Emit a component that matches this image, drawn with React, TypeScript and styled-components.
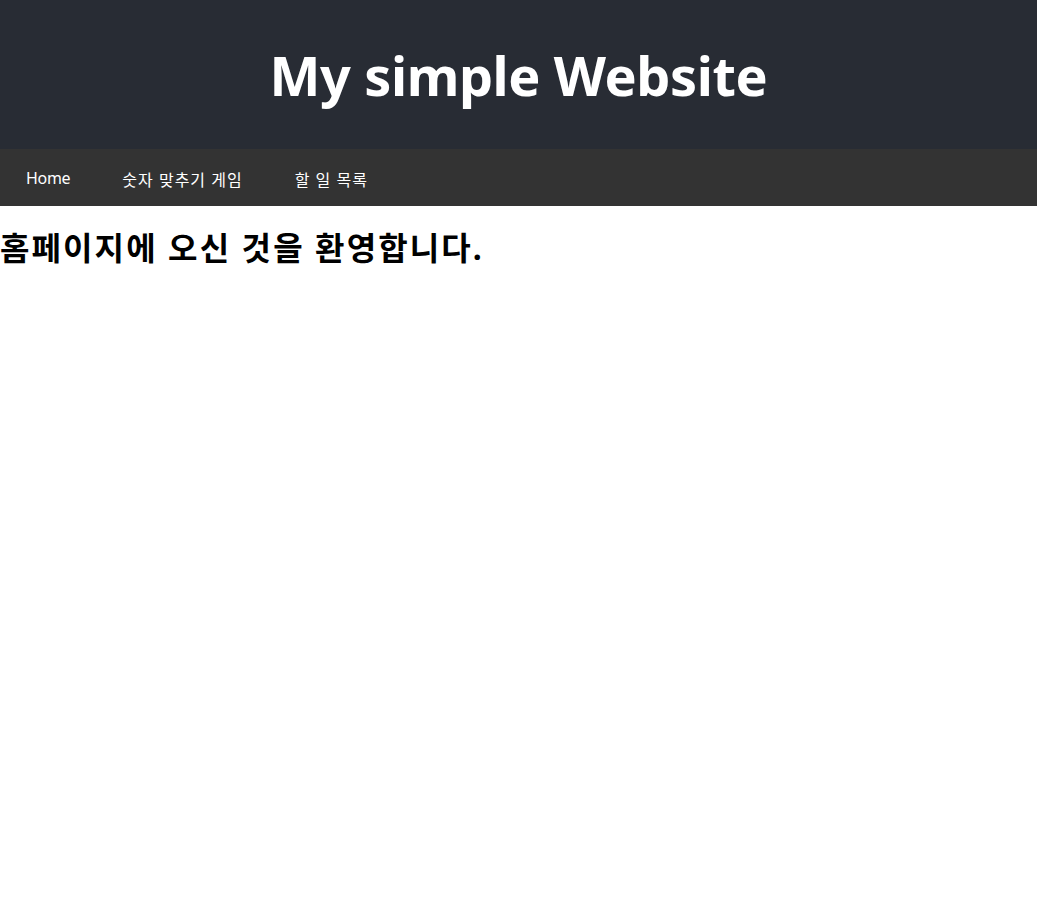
import styled, { createGlobalStyle } from "styled-components";

const GlobalStyle = createGlobalStyle`
  body {
    margin: 0;
    font-family: "Noto Sans", "Noto Sans CJK KR", sans-serif;
    background: #ffffff;
  }
`;

const Header = styled.header`
  background-color: #282c34;
  height: 149px;
  display: flex;
  align-items: center;
  justify-content: center;
`;

const SiteTitle = styled.h1`
  margin: 0;
  color: #ffffff;
  font-size: 54px;
  font-weight: bold;
  letter-spacing: -0.4px;
`;

const NavBar = styled.nav`
  background-color: #333333;
  height: 57px;
  display: flex;
  align-items: center;
`;

const NavList = styled.ul`
  list-style: none;
  margin: 2px 0 0;
  padding: 0;
  display: flex;
`;

const NavItem = styled.li<{ $wide?: boolean }>`
  padding: 0 26px;
  & a {
    color: #ffffff;
    text-decoration: none;
    font-size: 16px;
    letter-spacing: ${({ $wide }) => ($wide ? "1px" : "-0.3px")};
  }
`;

const Welcome = styled.h1`
  margin: 17px 0;
  font-size: 32px;
  font-weight: bold;
  color: #000000;
  letter-spacing: 2.1px;
`;

export default function App() {
  return (
    <>
      <GlobalStyle />
      <Header>
        <SiteTitle>My simple Website</SiteTitle>
      </Header>
      <NavBar>
        <NavList>
          <NavItem>
            <a href="#">Home</a>
          </NavItem>
          <NavItem $wide>
            <a href="#">숫자 맞추기 게임</a>
          </NavItem>
          <NavItem $wide>
            <a href="#">할 일 목록</a>
          </NavItem>
        </NavList>
      </NavBar>
      <main>
        <Welcome>홈페이지에 오신 것을 환영합니다.</Welcome>
      </main>
    </>
  );
}
